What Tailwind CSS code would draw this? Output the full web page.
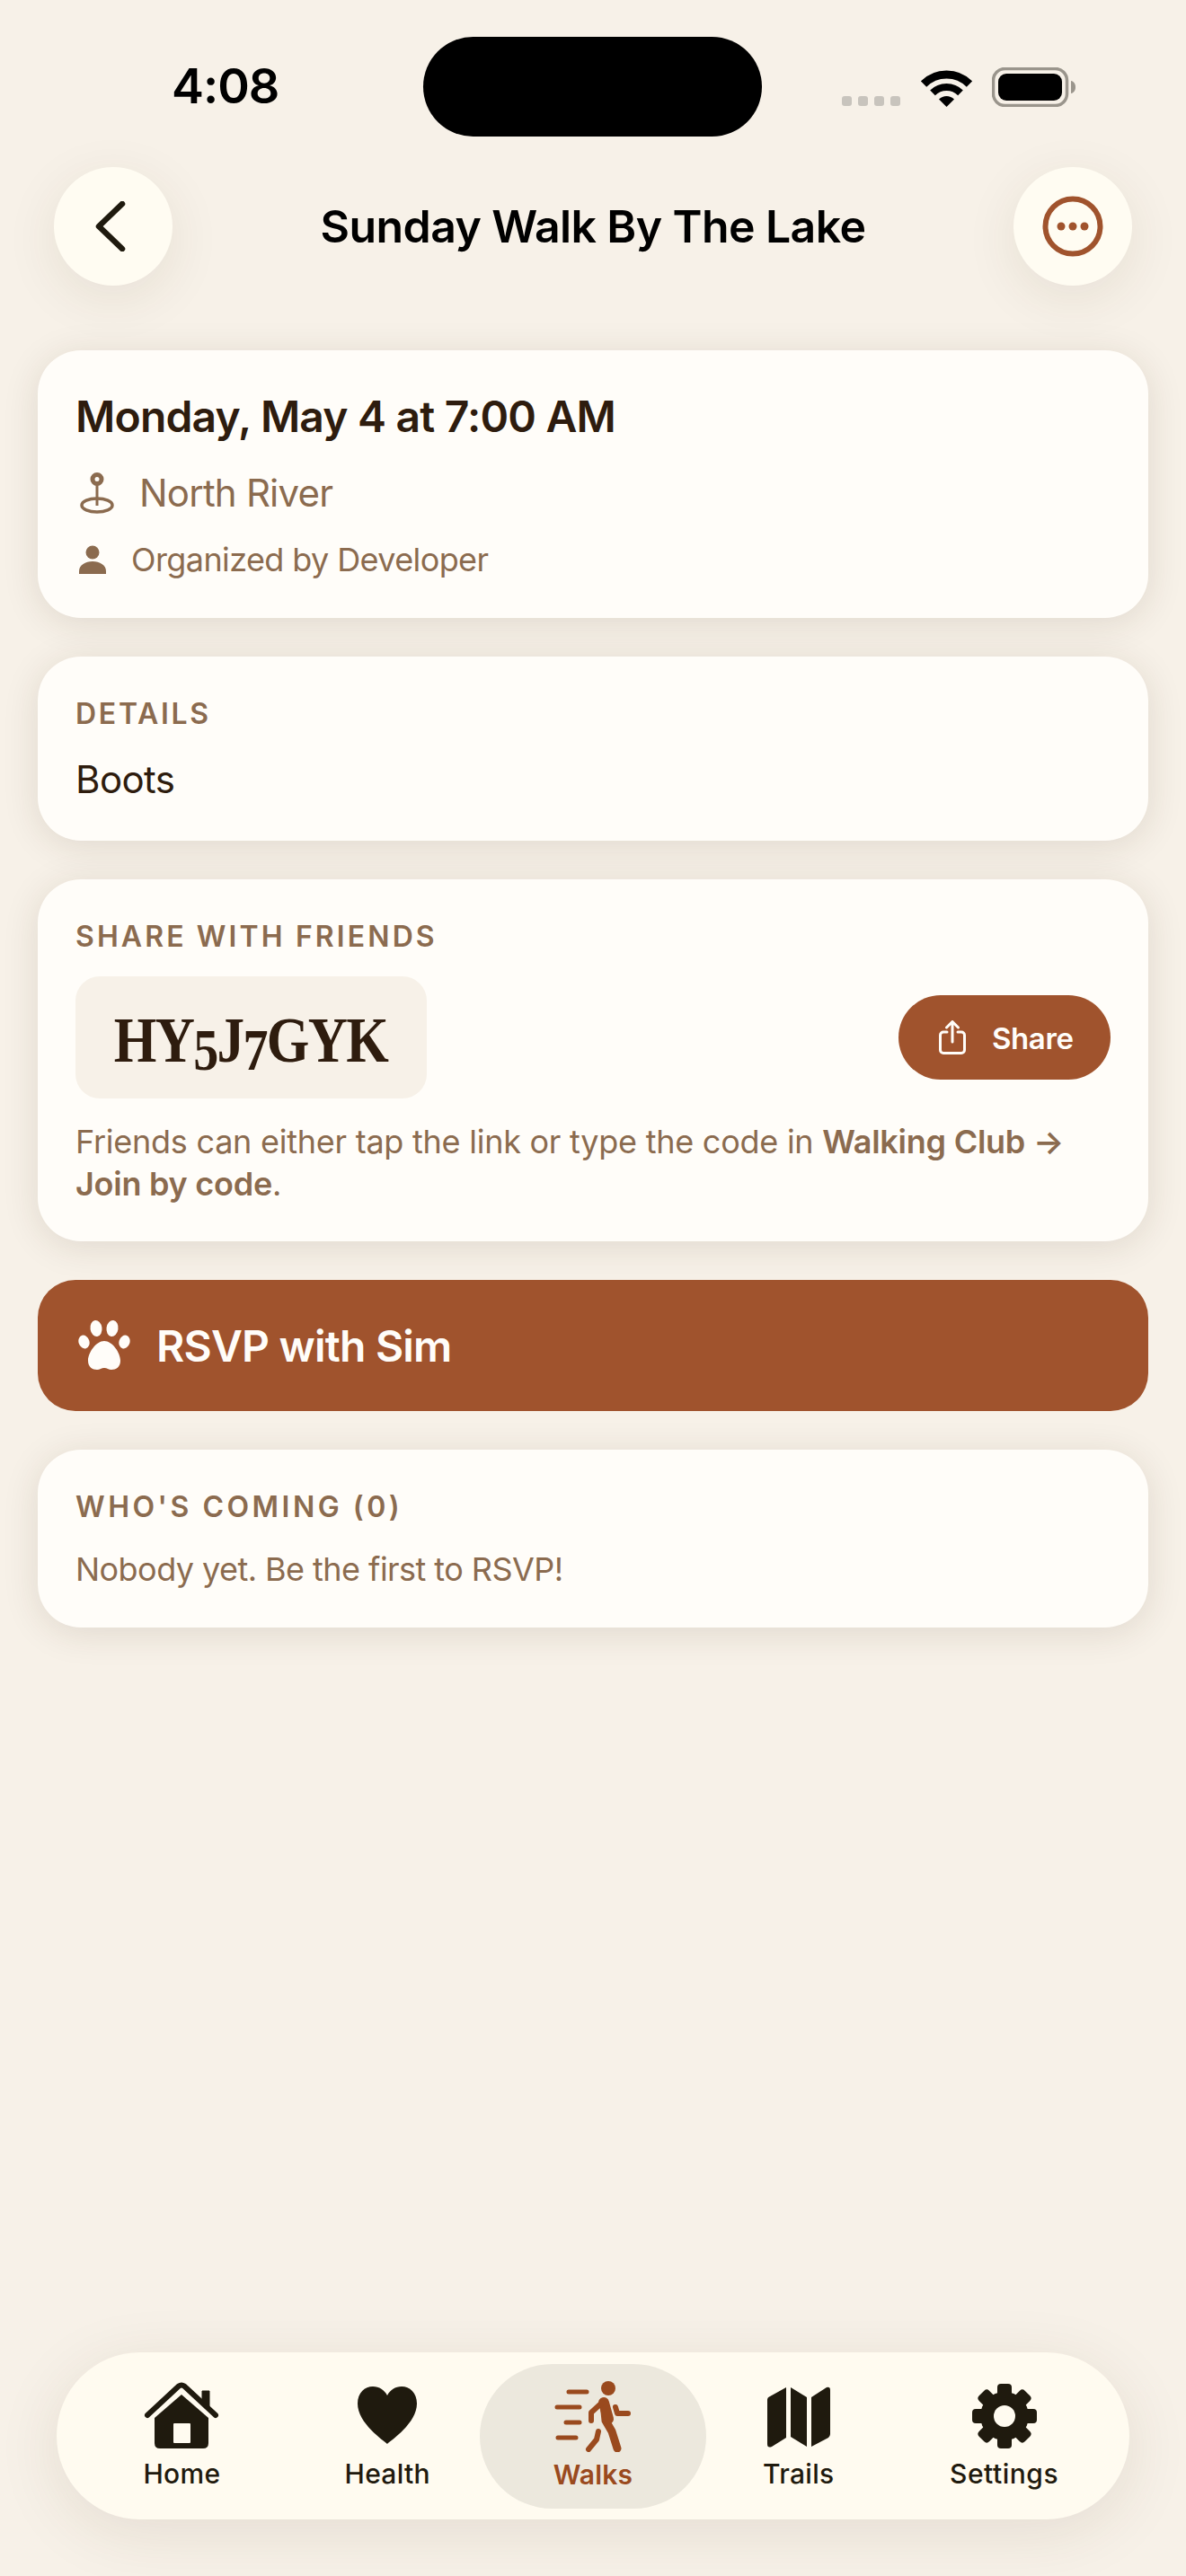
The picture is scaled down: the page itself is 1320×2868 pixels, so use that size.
<!DOCTYPE html>
<html lang="en">
<head>
<meta charset="utf-8">
<title>Sunday Walk By The Lake</title>
<script src="https://cdn.jsdelivr.net/npm/@tailwindcss/browser@4"></script>
</head>
<body class="m-0">
<div class="relative flex flex-col w-[1320px] h-[2868px] overflow-hidden bg-[#f7f1e8] font-['Inter',sans-serif]">

  <!-- Status bar -->
  <div class="relative h-[186px] shrink-0">
    <div class="absolute left-[471px] top-[41px] w-[377px] h-[111px] rounded-full bg-black"></div>
    <div class="flex items-start justify-between pl-[191px] pr-[122px] pt-[64px]">
      <span class="text-[54px] leading-[64px] font-semibold text-black tracking-[-1px]">4:08</span>
      <div class="flex items-end pt-[11px]">
        <div class="flex gap-[7px] mb-[1px]">
          <span class="w-[11px] h-[11px] rounded-[3px] bg-[#c8c4bd]"></span>
          <span class="w-[11px] h-[11px] rounded-[3px] bg-[#c8c4bd]"></span>
          <span class="w-[11px] h-[11px] rounded-[3px] bg-[#c8c4bd]"></span>
          <span class="w-[11px] h-[11px] rounded-[3px] bg-[#c8c4bd]"></span>
        </div>
        <svg class="ml-[23px]" width="57" height="42" viewBox="0 0 57 42" fill="none"><path d="M3 16.5A36 36 0 0 1 54 16.5" stroke="#000" stroke-width="9"/><path d="M13 26.4A22 22 0 0 1 44 26.4" stroke="#000" stroke-width="8"/><path d="M28.5 42L20 33.5A12 12 0 0 1 37 33.5Z" fill="#000"/></svg>
        <svg class="ml-[22px]" width="94" height="44" viewBox="0 0 94 44" fill="none"><rect x="1.5" y="1.5" width="82" height="41" rx="13" stroke="#9a958c" stroke-width="3.5"/><rect x="7" y="7" width="71" height="30" rx="9" fill="#000"/><path d="M88 15c3 .5 5 3 5 7s-2 6.500-5 7z" fill="#9a958c"/></svg>
      </div>
    </div>
  </div>

  <!-- Header -->
  <div class="flex items-center justify-between px-[60px] h-[132px] shrink-0">
    <div class="flex items-center justify-center size-[132px] rounded-full bg-[#fffcf2] shadow-[0_14px_60px_rgba(70,50,20,0.09)]">
      <svg class="-ml-[6px]" width="34" height="56" viewBox="0 0 34 56" fill="none"><path d="M30 3L4 28L30 53" stroke="#1f1a0e" stroke-width="6.500" stroke-linecap="round" stroke-linejoin="round"/></svg>
    </div>
    <h1 class="flex-1 text-center text-[50px] leading-[64px] font-semibold text-black tracking-[-0.6px]">Sunday Walk By The Lake</h1>
    <div class="flex items-center justify-center size-[132px] rounded-full bg-[#fffcf2] shadow-[0_14px_60px_rgba(70,50,20,0.09)]">
      <svg width="68" height="68" viewBox="0 0 68 68" fill="none"><circle cx="34" cy="34" r="30.500" stroke="#a0532d" stroke-width="6"/><circle cx="21" cy="34" r="4.500" fill="#a0532d"/><circle cx="34" cy="34" r="4.500" fill="#a0532d"/><circle cx="47" cy="34" r="4.500" fill="#a0532d"/></svg>
    </div>
  </div>

  <!-- Cards -->
  <div class="flex flex-col gap-[43px] px-[42px] mt-[72px]">
    <section class="h-[298px] rounded-[48px] bg-[#fffdf9] px-[42px] pt-[42px] shadow-[0_6px_40px_rgba(60,40,20,0.12)]">
      <h2 class="text-[48px] leading-[64px] font-semibold text-[#2e1c0e] tracking-[-0.8px]">Monday, May 4 at 7:00 AM</h2>
      <div class="flex items-center mt-[27px] h-[52px]">
        <svg class="ml-[4px]" width="40" height="46" viewBox="0 0 40 46" fill="none"><circle cx="20" cy="7.500" r="5" stroke="#8b6b4f" stroke-width="5"/><path d="M20 13V37" stroke="#8b6b4f" stroke-width="3"/><ellipse cx="20" cy="36.500" rx="17" ry="7.500" stroke="#8b6b4f" stroke-width="3.500"/></svg>
        <span class="ml-[27px] text-[42px] leading-[52px] text-[#8b6b4f] tracking-[-0.8px]">North River</span>
      </div>
      <div class="flex items-center mt-[24px] h-[48px]">
        <svg class="ml-[4px]" width="30" height="32" viewBox="0 0 30 32" fill="#8b6b4f"><circle cx="15" cy="8" r="7.500"/><path d="M0 32V29C0 22 7 18 15 18C23 18 30 22 30 29V32Z"/></svg>
        <span class="ml-[28px] text-[36px] leading-[48px] text-[#8b6b4f] tracking-[-0.6px]">Organized by Developer</span>
      </div>
    </section>

    <section class="h-[205px] rounded-[48px] bg-[#fffdf9] px-[42px] pt-[44px] shadow-[0_6px_40px_rgba(60,40,20,0.12)]">
      <h3 class="text-[32px] leading-[40px] font-semibold text-[#8b6b4f] tracking-[2.7px]">DETAILS</h3>
      <p class="mt-[25px] text-[42px] leading-[56px] text-[#2e1c0e] tracking-[-0.6px]">Boots</p>
    </section>

    <section class="h-[403px] rounded-[48px] bg-[#fffdf9] px-[42px] pt-[44px] shadow-[0_6px_40px_rgba(60,40,20,0.12)]">
      <h3 class="text-[32px] leading-[40px] font-semibold text-[#8b6b4f] tracking-[3.1px]">SHARE WITH FRIENDS</h3>
      <div class="flex items-center justify-between mt-[24px]">
        <div class="flex items-center justify-center w-[391px] h-[136px] rounded-[27px] bg-[#f7f1e8] overflow-hidden">
          <span class="relative top-[4px] font-['Liberation_Serif',serif] text-[72px] leading-[80px] font-bold text-[#2e1c0e] tracking-[-2px] scale-x-[0.85]">HY<span class="relative top-[9px] text-[66px]">5</span>J<span class="relative top-[9px] text-[66px]">7</span>GYK</span>
        </div>
        <div class="flex items-center w-[236px] h-[94px] rounded-full bg-[#a0532d] pl-[45px]">
          <svg width="30" height="38" viewBox="0 0 30 38" fill="none" stroke="#fffdf9" stroke-width="3" stroke-linecap="round" stroke-linejoin="round"><path d="M9 13H5A3.500 3.500 0 0 0 1.500 16.500V33A3.500 3.500 0 0 0 5 36.500H25A3.500 3.500 0 0 0 28.500 33V16.500A3.500 3.500 0 0 0 25 13H21"/><path d="M15 24V2M8.500 8L15 1.500L21.500 8"/></svg>
          <span class="ml-[29px] mt-[2px] text-[33px] leading-[40px] font-semibold text-[#fffdf9] tracking-[-0.4px]">Share</span>
        </div>
      </div>
      <p class="mt-[25px] w-[1130px] text-[36px] leading-[47px] text-[#8b6b4f] tracking-[-0.25px]">Friends can either tap the link or type the code in <strong class="font-semibold">Walking Club →</strong> <strong class="font-semibold">Join by code</strong>.</p>
    </section>

    <section class="flex items-center h-[146px] rounded-[42px] bg-[#a0532d] pl-[45px]">
      <svg width="58" height="58" viewBox="0 0 58 58" fill="#fffdf9"><ellipse cx="6.500" cy="25" rx="6" ry="7.500" transform="rotate(-18 6.500 25)"/><ellipse cx="20" cy="10" rx="6.500" ry="9" transform="rotate(-8 20 10)"/><ellipse cx="38" cy="10" rx="6.500" ry="9" transform="rotate(8 38 10)"/><ellipse cx="51.500" cy="25" rx="6" ry="7.500" transform="rotate(18 51.500 25)"/><path d="M29 24C20 24 11 37 11 46C11 53 16 56 21 56C24 56 26 54 29 54C32 54 34 56 37 56C42 56 47 53 47 46C47 37 38 24 29 24Z"/></svg>
      <span class="ml-[29px] mt-[2px] text-[48px] leading-[60px] font-semibold text-[#fffdf9] tracking-[-0.8px]">RSVP with Sim</span>
    </section>

    <section class="h-[198px] rounded-[48px] bg-[#fffdf9] px-[42px] pt-[44px] shadow-[0_6px_40px_rgba(60,40,20,0.12)]">
      <h3 class="text-[32px] leading-[40px] font-semibold text-[#8b6b4f] tracking-[3.5px]">WHO'S COMING (0)</h3>
      <p class="mt-[25px] text-[36px] leading-[48px] text-[#8b6b4f] tracking-[-0.55px]">Nobody yet. Be the first to RSVP!</p>
    </section>
  </div>

  <!-- Tab bar -->
  <nav class="mt-auto mb-[63px] mx-[63px] h-[186px] shrink-0 rounded-full bg-[#fffbf0] px-[25px] grid grid-cols-5 items-center shadow-[0_14px_70px_rgba(70,50,20,0.1)]">
    <div class="flex flex-col items-center h-[161px] pt-[20px] text-[#1f1a0e]">
      <svg width="84" height="76" viewBox="0 0 84 76"><path d="M4 36L39 3.500Q42 1.500 45 3.500L80 36" fill="none" stroke="#1f1a0e" stroke-width="6" stroke-linecap="round" stroke-linejoin="round" transform="translate(0 1)"/><path d="M65 10H73V27L65 19Z" fill="#1f1a0e" stroke="#1f1a0e" stroke-width="1" stroke-linejoin="round"/><path d="M42 14L72 40V68Q72 74 66 74H18Q12 74 12 68V40Z" fill="#1f1a0e"/><rect x="33" y="46" width="19" height="22" rx="1" fill="#fffbf0"/></svg>
      <span class="mt-[8px] text-[30px] leading-[36px] font-medium tracking-[0.3px]">Home</span>
    </div>
    <div class="flex flex-col items-center h-[161px] pt-[20px] text-[#1f1a0e]">
      <svg width="70" height="76" viewBox="0 0 70 76"><path d="M35 69C31 65 2 46 2 24C2 12 10 5 19 5C26 5 32 9 35 15C38 9 44 5 51 5C60 5 68 12 68 24C68 46 39 65 35 69Z" fill="#1f1a0e"/></svg>
      <span class="mt-[8px] text-[30px] leading-[36px] font-medium tracking-[0.3px]">Health</span>
    </div>
    <div class="flex flex-col items-center h-[161px] pt-[19px] -mx-[12px] rounded-full bg-[#ece8dd] text-[#9a4a1e]">
      <svg width="86" height="79" viewBox="0 0 86 79" fill="none" stroke="#9a4a1e" stroke-linecap="round" stroke-linejoin="round"><circle cx="60" cy="8" r="8" fill="#9a4a1e" stroke="none"/><path d="M16 12H36M3 29H28M13 46H28M4 63H24" stroke-width="5"/><path d="M55 24L57 44L64 56L70 75" stroke-width="9"/><path d="M55 24L60 42" stroke-width="12"/><path d="M53 24L41 35V44" stroke-width="6"/><path d="M49 56L47 65L38 76" stroke-width="6"/><path d="M68 29L70 36H82" stroke-width="6"/></svg>
      <span class="mt-[7px] text-[30px] leading-[36px] font-semibold tracking-[0.2px]">Walks</span>
    </div>
    <div class="flex flex-col items-center h-[161px] pt-[20px] text-[#1f1a0e]">
      <svg width="72" height="76" viewBox="0 0 72 76" fill="#1f1a0e"><path d="M22 6V62L6 72Q1 74 1 69V20Q1 17 4 16Z"/><path d="M27 6L45 17V72L27 61Z"/><path d="M50 17L67 6Q71 5 71 9V58Q71 60 69 62L50 72Z"/></svg>
      <span class="mt-[8px] text-[30px] leading-[36px] font-medium tracking-[0.3px]">Trails</span>
    </div>
    <div class="flex flex-col items-center h-[161px] pt-[20px] text-[#1f1a0e]">
      <svg width="74" height="76" viewBox="0 0 74 76" fill="#1f1a0e"><circle cx="37" cy="38" r="27"/><g><rect x="29" y="2" width="16" height="72" rx="4"/><rect x="29" y="2" width="16" height="72" rx="4" transform="rotate(45 37 38)"/><rect x="29" y="2" width="16" height="72" rx="4" transform="rotate(90 37 38)"/><rect x="29" y="2" width="16" height="72" rx="4" transform="rotate(135 37 38)"/></g><circle cx="37" cy="38" r="12" fill="#fffbf0"/></svg>
      <span class="mt-[8px] text-[30px] leading-[36px] font-medium tracking-[0.5px]">Settings</span>
    </div>
  </nav>
</div>
</body>
</html>
